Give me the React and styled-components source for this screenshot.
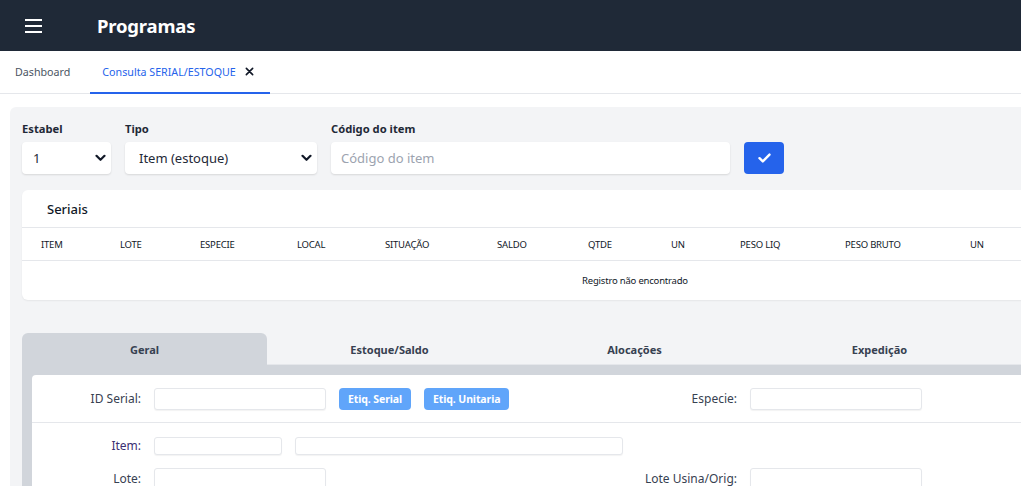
import React from "react";
import styled, { createGlobalStyle } from "styled-components";

const GlobalStyle = createGlobalStyle`
  html, body {
    margin: 0;
    padding: 0;
    background: #ffffff;
    overflow: hidden;
  }
  body {
    font-family: "Noto Sans", "Open Sans", Arial, sans-serif;
    color: #1f2937;
  }
  * { box-sizing: border-box; }
`;

const columns = [
  { label: "Item", width: 79 },
  { label: "Lote", width: 80 },
  { label: "Especie", width: 97 },
  { label: "Local", width: 88 },
  { label: "Situação", width: 112 },
  { label: "Saldo", width: 91 },
  { label: "Qtde", width: 83 },
  { label: "Un", width: 69 },
  { label: "Peso Liq", width: 105 },
  { label: "Peso Bruto", width: 125 },
  { label: "Un", width: 120 },
];

const detailTabs = ["Geral", "Estoque/Saldo", "Alocações", "Expedição", "Histórico"];

export default function App() {
  return (
    <>
      <GlobalStyle />
      <Header>
        <MenuButton aria-label="menu">
          <Bar />
          <Bar />
          <Bar />
        </MenuButton>
        <Title>Programas</Title>
      </Header>

      <PageTabs>
        <PageTab>Dashboard</PageTab>
        <PageTab $active>
          Consulta SERIAL/ESTOQUE
          <Close>
            <svg width="9" height="9" viewBox="0 0 10 10">
              <path d="M1.5 1.5 L8.5 8.5 M8.5 1.5 L1.5 8.5" stroke="#111827" strokeWidth="1.8" strokeLinecap="round" />
            </svg>
          </Close>
        </PageTab>
      </PageTabs>

      <Content>
        <Panel>
          <Filters>
            <Field>
              <Label>Estabel</Label>
              <SelectBox $width={89}>
                <Select defaultValue="1" $pad={11}>
                  <option value="1">1</option>
                </Select>
                <Chevron />
              </SelectBox>
            </Field>
            <Field>
              <Label>Tipo</Label>
              <SelectBox $width={192}>
                <Select defaultValue="item" $pad={14}>
                  <option value="item">Item (estoque)</option>
                </Select>
                <Chevron />
              </SelectBox>
            </Field>
            <Field>
              <Label>Código do item</Label>
              <TextInput placeholder="Código do item" />
            </Field>
            <ConfirmButton aria-label="confirmar">
              <svg width="13" height="10" viewBox="0 0 13 10">
                <path d="M1.5 5.2 L4.8 8.4 L11.5 1.6" fill="none" stroke="#ffffff" strokeWidth="2.4" strokeLinecap="round" strokeLinejoin="round" />
              </svg>
            </ConfirmButton>
          </Filters>

          <Card>
            <CardTitle>Seriais</CardTitle>
            <HeadRow>
              {columns.map((c, i) => (
                <HeadCell key={i} style={{ width: c.width }}>
                  {c.label}
                </HeadCell>
              ))}
            </HeadRow>
            <EmptyRow>Registro não encontrado</EmptyRow>
          </Card>

          <Details>
            <TabList>
              {detailTabs.map((t, i) => (
                <DetailTab key={t} $active={i === 0}>
                  {t}
                </DetailTab>
              ))}
            </TabList>
            <TabPanel>
              <Form>
                <FormRow $border>
                  <FieldLabel>ID Serial:</FieldLabel>
                  <Inline>
                    <Input $w={172} $h={22} />
                    <TagButton>Etiq. Serial</TagButton>
                    <TagButton>Etiq. Unitaria</TagButton>
                  </Inline>
                  <FieldLabel>Especie:</FieldLabel>
                  <Input $w={172} $h={22} />
                </FormRow>
                <FormBlock>
                  <FormRow>
                    <FieldLabel $tint>Item:</FieldLabel>
                    <Inline $span>
                      <Input $w={128} $h={18} />
                      <Input $w={328} $h={18} />
                    </Inline>
                  </FormRow>
                  <FormRow>
                    <FieldLabel>Lote:</FieldLabel>
                    <Inline>
                      <Input $w={172} $h={22} />
                    </Inline>
                    <FieldLabel>Lote Usina/Orig:</FieldLabel>
                    <Input $w={172} $h={22} />
                  </FormRow>
                </FormBlock>
              </Form>
            </TabPanel>
          </Details>
        </Panel>
      </Content>
    </>
  );
}

function Chevron() {
  return (
    <ChevronIcon width="11" height="8" viewBox="0 0 11 8">
      <path d="M1.5 1.8 L5.5 5.8 L9.5 1.8" fill="none" stroke="#111827" strokeWidth="2.2" strokeLinecap="round" strokeLinejoin="round" />
    </ChevronIcon>
  );
}

const Header = styled.header`
  height: 51px;
  background: #1f2937;
  display: flex;
  align-items: center;
  padding-left: 25px;
`;

const MenuButton = styled.button`
  width: 17px;
  height: 14px;
  padding: 0;
  border: none;
  background: transparent;
  display: flex;
  flex-direction: column;
  justify-content: space-between;
  margin-top: 1px;
`;

const Bar = styled.span`
  display: block;
  width: 17px;
  height: 2px;
  background: #ffffff;
`;

const Title = styled.h1`
  margin: 0 0 0 55px;
  font-size: 18.5px;
  font-weight: 700;
  color: #ffffff;
  letter-spacing: -0.2px;
`;

const PageTabs = styled.nav`
  height: 43px;
  display: flex;
  border-bottom: 1px solid #e5e7eb;
`;

const PageTab = styled.div`
  display: flex;
  align-items: center;
  height: 43px;
  padding: ${({ $active }) => ($active ? "0 16px 0 12px" : "0 20px 0 15px")};
  font-size: 10.7px;
  color: ${({ $active }) => ($active ? "#2563eb" : "#4b5563")};
  border-bottom: 2px solid ${({ $active }) => ($active ? "#2563eb" : "transparent")};
  margin-bottom: -1px;
`;

const Close = styled.span`
  display: flex;
  margin-left: 9px;
`;

const Content = styled.main`
  padding: 13px 10px;
`;

const Panel = styled.section`
  width: 1250px;
  background: #f3f4f6;
  border-radius: 6px;
  padding: 14px 12px 40px;
`;

const Filters = styled.div`
  display: flex;
  align-items: flex-end;
  gap: 14px;
`;

const Field = styled.div`
  display: flex;
  flex-direction: column;
`;

const Label = styled.label`
  font-size: 11.2px;
  font-weight: 700;
  line-height: 16px;
  color: #1f2937;
  margin-bottom: 5px;
`;

const SelectBox = styled.div`
  position: relative;
  width: ${({ $width }) => $width}px;
  height: 32px;
`;

const Select = styled.select`
  appearance: none;
  width: 100%;
  height: 100%;
  border: none;
  border-radius: 4px;
  background: #ffffff;
  box-shadow: 0 1px 2px rgba(0, 0, 0, 0.12);
  padding-left: ${({ $pad }) => $pad}px;
  font-family: inherit;
  font-size: 13px;
  color: #1f2937;
`;

const ChevronIcon = styled.svg`
  position: absolute;
  right: 5px;
  top: 12px;
  pointer-events: none;
`;

const TextInput = styled.input`
  width: 399px;
  height: 32px;
  border: none;
  border-radius: 4px;
  background: #ffffff;
  box-shadow: 0 1px 2px rgba(0, 0, 0, 0.12);
  padding-left: 10px;
  font-family: inherit;
  font-size: 13px;
  &::placeholder {
    color: #9ca3af;
  }
`;

const ConfirmButton = styled.button`
  width: 40px;
  height: 32px;
  border: none;
  border-radius: 4px;
  background: #2563eb;
  display: flex;
  align-items: center;
  justify-content: center;
  padding: 0;
`;

const Card = styled.div`
  margin-top: 16px;
  background: #ffffff;
  border-radius: 6px;
  box-shadow: 0 1px 2px rgba(0, 0, 0, 0.06);
`;

const CardTitle = styled.div`
  height: 38px;
  display: flex;
  align-items: center;
  padding-left: 25px;
  font-size: 13px;
  font-weight: 500;
  color: #111827;
  border-bottom: 1px solid #e5e7eb;
`;

const HeadRow = styled.div`
  height: 33px;
  display: flex;
  align-items: center;
  padding-left: 19px;
  border-bottom: 1px solid #e5e7eb;
`;

const HeadCell = styled.div`
  flex: none;
  font-size: 9.5px;
  text-transform: uppercase;
  color: #111827;
  letter-spacing: -0.2px;
`;

const EmptyRow = styled.div`
  height: 39px;
  display: flex;
  align-items: center;
  justify-content: center;
  font-size: 9.5px;
  color: #111827;
  letter-spacing: -0.2px;
`;

const Details = styled.div`
  margin-top: 33px;
`;

const TabList = styled.div`
  display: flex;
`;

const DetailTab = styled.div`
  flex: 0 0 245px;
  height: 32px;
  display: flex;
  align-items: center;
  justify-content: center;
  font-size: 11px;
  font-weight: 700;
  color: #374151;
  background: ${({ $active }) => ($active ? "#d1d5db" : "transparent")};
  border-radius: ${({ $active }) => ($active ? "6px 6px 0 0" : "0")};
  border-bottom: 1px solid ${({ $active }) => ($active ? "#d1d5db" : "#e5e7eb")};
  padding-top: 1px;
`;

const TabPanel = styled.div`
  background: #d1d5db;
  padding: 10px 0 0 10px;
`;

const Form = styled.div`
  background: #ffffff;
  border-radius: 4px 0 0 0;
  padding-bottom: 10px;
`;

const FormRow = styled.div`
  display: grid;
  grid-template-columns: 109px 446px 124px 172px;
  column-gap: 13px;
  align-items: center;
  height: ${({ $border }) => ($border ? "48px" : "auto")};
  border-bottom: ${({ $border }) => ($border ? "1px solid #e5e7eb" : "none")};
`;

const FormBlock = styled.div`
  display: flex;
  flex-direction: column;
  gap: 13px;
  padding-top: 14px;
`;

const FieldLabel = styled.label`
  text-align: right;
  font-size: 12px;
  line-height: 16px;
  color: ${({ $tint }) => ($tint ? "#3b2f72" : "#374151")};
  white-space: nowrap;
`;

const Inline = styled.div`
  display: flex;
  align-items: center;
  gap: 13px;
  grid-column: ${({ $span }) => ($span ? "span 2" : "auto")};
`;

const Input = styled.input`
  width: ${({ $w }) => $w}px;
  height: ${({ $h }) => $h}px;
  border: 1px solid #e5e7eb;
  border-radius: 3px;
  background: #ffffff;
  box-shadow: 0 1px 1px rgba(0, 0, 0, 0.05);
  padding: 0 6px;
  font-family: inherit;
  font-size: 12px;
`;

const TagButton = styled.button`
  height: 22px;
  border: none;
  border-radius: 4px;
  background: #60a5fa;
  color: #ffffff;
  font-family: inherit;
  font-size: 10.5px;
  font-weight: 700;
  padding: 0 9px;
  letter-spacing: -0.1px;
`;
